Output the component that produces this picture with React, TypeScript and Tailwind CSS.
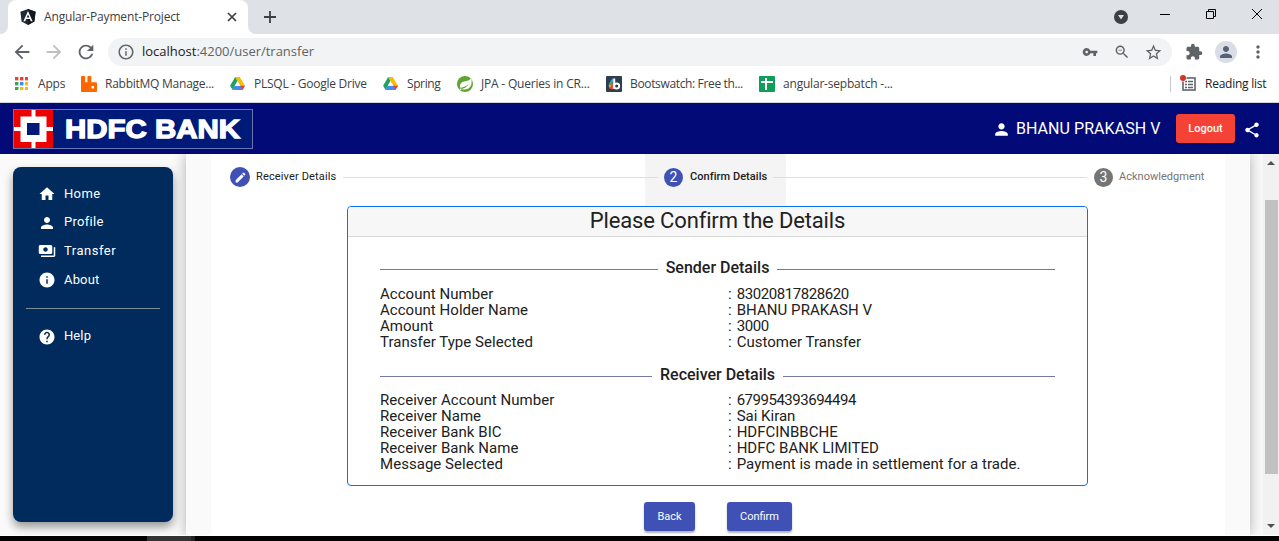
import React from "react";
import {
  MdArrowBack, MdArrowForward, MdRefresh, MdInfoOutline, MdVpnKey, MdZoomOut, MdStarBorder,
  MdExtension, MdPerson, MdMoreVert, MdHome, MdPayments, MdInfo, MdHelp, MdShare, MdEdit,
} from "react-icons/md";

function AngularLogo() {
  return (
    <svg viewBox="0 0 16 16" className="h-4 w-4 shrink-0">
      <path d="M8 0 15.6 2.7 14.4 12.6 8 16 1.6 12.6.4 2.7Z" fill="#1f2937" />
      <path d="M8 0 15.6 2.7 14.4 12.6 8 16Z" fill="#111820" />
      <path d="M8 2 3.4 12.3H5.2L6.1 10H9.9L10.8 12.3H12.6ZM8 5.4 9.3 8.5H6.7Z" fill="#fff" />
    </svg>
  );
}

function DriveLogo() {
  return (
    <svg viewBox="0 0 16 14" className="h-[13px] w-[15px]">
      <path d="M5.5 0H10.5L16 9.3H11Z" fill="#fbbc04" />
      <path d="M5.5 0 8 4.4 2.8 14 0 9.3Z" fill="#1ea362" />
      <path d="M5 9.3H16L13.3 14H2.6Z" fill="#4688f4" />
      <path d="M11 9.3H16L13.3 14Z" fill="#ea4335" />
      <path d="M8 4.6 10.8 9.3H5.2Z" fill="#fff" />
    </svg>
  );
}

function AppsGrid() {
  const c = ["#ea4335", "#ea4335", "#ea4335", "#34a853", "#4285f4", "#fbbc04", "#34a853", "#fbbc04", "#fbbc04"];
  return (
    <svg viewBox="0 0 13 13" className="h-[13px] w-[13px]">
      {c.map((f, i) => (
        <rect key={i} x={(i % 3) * 5} y={Math.floor(i / 3) * 5} width="3.4" height="3.4" fill={f} />
      ))}
    </svg>
  );
}

function RabbitLogo() {
  return (
    <svg viewBox="0 0 16 16" className="h-4 w-4">
      <path d="M0 1Q0 0 1 0H3.3Q4.2 0 4.2 1V6.2H6.4V1Q6.4 0 7.4 0H9.4Q10.3 0 10.3 1V6.2H15Q16 6.2 16 7.2V15Q16 16 15 16H1Q0 16 0 15ZM10.6 10V12.5H13V10Z" fill="#ff6600" fillRule="evenodd" />
    </svg>
  );
}

function SpringLogo() {
  return (
    <svg viewBox="0 0 16 16" className="h-4 w-4">
      <circle cx="8" cy="8" r="8" fill="#5fa532" />
      <path d="M14.2 2.1C15 5.8 15 10.7 11.4 12.5 8.4 14 5.2 13.2 2.8 13.4 6 13 9.5 11.8 11.7 8.1 8.5 11 5.7 11.6 3.2 11.8 2.2 8.7 4 6.2 7.3 5.6 10.3 5 12.8 4.6 14.2 2.1Z" fill="#fff" />
      <circle cx="3.4" cy="13.3" r=".8" fill="#fff" />
    </svg>
  );
}

function BootswatchLogo() {
  return (
    <svg viewBox="0 0 16 16" className="h-4 w-4">
      <rect width="16" height="16" rx="1" fill="#2c3e50" />
      <path d="M7 2V7L4.5 5Z" fill="#4f9fd0" />
      <path d="M4.5 5 7 7.5 2.5 9Z" fill="#2fb58c" />
      <path d="M2.5 9 7 8 3.5 12.5Z" fill="#f39c12" />
      <path d="M3.5 12.5 7 8V13.5Z" fill="#e74c3c" />
      <path d="M8.2 2.5V13" stroke="#fff" strokeWidth="2" />
      <circle cx="10.6" cy="10" r="2.6" fill="none" stroke="#fff" strokeWidth="2" />
    </svg>
  );
}

function SheetLogo() {
  return (
    <svg viewBox="0 0 16 16" className="h-4 w-4">
      <rect width="16" height="16" rx="1" fill="#0f9d58" />
      <path d="M7 2V14M2 6H14" stroke="#fff" strokeWidth="2" />
    </svg>
  );
}

function ReadingListIcon() {
  return (
    <svg viewBox="0 0 18 17" className="h-[17px] w-[18px]">
      <rect x="3" y="3" width="12" height="12" fill="none" stroke="#5f6368" strokeWidth="1.6" />
      <path d="M5 6.5H7M5 9.5H7M5 12.5H7M8 6.5H13M8 9.5H13M8 12.5H13" stroke="#5f6368" strokeWidth="1.3" />
      <circle cx="3" cy="3" r="3.6" fill="#fff" />
      <circle cx="3" cy="3" r="3" fill="#d93025" />
    </svg>
  );
}

function Bookmark({ icon, label, width, track }: { icon: React.ReactNode; label: string; width: string; track: string }) {
  return (
    <div className={`flex shrink-0 items-center whitespace-nowrap ${width}`}>
      <span className="flex w-6 shrink-0">{icon}</span>
      <span className={track}>{label}</span>
    </div>
  );
}

function Browser() {
  return (
    <div className="flex h-[103px] shrink-0 flex-col border-b border-[#d5d8dc] bg-white font-['Open_Sans',sans-serif] text-[12px] text-[#3c4043]">
      <div className="flex h-[34px] shrink-0 bg-[#dee1e6]">
        <div className="flex w-2 items-end bg-white"><div className="h-full w-2 rounded-br-lg bg-[#dee1e6]" /></div>
        <div className="flex w-[240px] items-center rounded-t-lg bg-white pl-3">
          <AngularLogo />
          <span className="ml-2 w-[183px] whitespace-nowrap tracking-[-0.16px]">Angular-Payment-Project</span>
          <svg viewBox="0 0 10 10" className="h-[10px] w-[10px] shrink-0"><path d="M1 1 9 9M9 1 1 9" stroke="#3c4043" strokeWidth="1.7" /></svg>
        </div>
        <div className="w-2 bg-white"><div className="h-full w-2 rounded-bl-lg bg-[#dee1e6]" /></div>
        <svg viewBox="0 0 12 12" className="mt-[11px] ml-2 h-3 w-3"><path d="M6 0V12M0 6H12" stroke="#3c4043" strokeWidth="1.8" /></svg>
        <svg viewBox="0 0 14 14" className="mt-[10px] ml-[838px] h-[14px] w-[14px]"><circle cx="7" cy="7" r="7" fill="#3c4043" /><path d="M4 5H10L7 9.5Z" fill="#dee1e6" /></svg>
        <svg viewBox="0 0 10 10" className="mt-[9px] ml-8 h-[10px] w-[10px]"><path d="M0 5.5H10" stroke="#000" /></svg>
        <svg viewBox="0 0 10 10" className="mt-[9px] ml-9 h-[10px] w-[10px]"><path d="M.5 2.5H7.5V9.5H.5ZM2.5 2V.5H9.5V7.5H8" fill="none" stroke="#000" /></svg>
        <svg viewBox="0 0 10 10" className="mt-[9px] ml-9 h-[10px] w-[10px]"><path d="M0 0 10 10M10 0 0 10" stroke="#000" /></svg>
      </div>
      <div className="flex h-9 shrink-0 items-center text-[#5f6368]">
        <MdArrowBack className="ml-[11px] h-[22px] w-[22px]" />
        <MdArrowForward className="ml-[10px] h-[22px] w-[22px] text-[#bdbfc1]" />
        <MdRefresh className="ml-[10px] h-[22px] w-[22px]" />
        <div className="ml-[11px] flex h-7 w-[1064px] items-center rounded-full bg-[#f1f3f4]">
          <MdInfoOutline className="ml-[9px] h-[18px] w-[18px]" />
          <span className="ml-[7px] w-[929px] text-[13px] tracking-[-0.01px]"><span className="text-[#202124]">localhost</span>:4200/user/transfer</span>
          <MdVpnKey className="ml-[11px] h-4 w-4" />
          <MdZoomOut className="ml-[15px] h-[18px] w-[18px] scale-95" />
          <MdStarBorder className="ml-[13px] h-[19px] w-[19px]" />
        </div>
        <MdExtension className="ml-[13px] h-[18px] w-[18px]" />
        <span className="ml-3 flex h-[22px] w-[22px] items-center justify-center rounded-full bg-[#dadde3]"><MdPerson className="h-[18px] w-[18px] text-[#536179]" /></span>
        <MdMoreVert className="ml-[11px] h-5 w-5" />
      </div>
      <div className="flex h-[27px] items-center pl-[15px]">
        <div className="flex w-[66px] items-center"><AppsGrid /><span className="ml-[10px] tracking-[-0.2px]">Apps</span></div>
        <Bookmark icon={<RabbitLogo />} label="RabbitMQ Manage..." width="w-[149px]" track="tracking-[-0.25px]" />
        <Bookmark icon={<DriveLogo />} label="PLSQL - Google Drive" width="w-[153px]" track="tracking-[-0.25px]" />
        <Bookmark icon={<DriveLogo />} label="Spring" width="w-[74px]" track="tracking-[-0.4px]" />
        <Bookmark icon={<SpringLogo />} label="JPA - Queries in CR..." width="w-[149px]" track="tracking-[-0.2px]" />
        <Bookmark icon={<BootswatchLogo />} label="Bootswatch: Free th..." width="w-[153px]" track="tracking-[-0.35px]" />
        <Bookmark icon={<SheetLogo />} label="angular-sepbatch -..." width="w-[411px]" track="tracking-[-0.2px]" />
        <div className="h-4 w-px bg-[#c7cacd]" />
        <span className="ml-[9px] w-[25px] shrink-0"><ReadingListIcon /></span>
        <span className="whitespace-nowrap text-[#202124] tracking-[-0.25px]">Reading list</span>
      </div>
    </div>
  );
}

function BankLogo() {
  return (
    <div className="flex h-10 w-[240px] items-center border border-[#6976ad] bg-[#001a79]">
      <svg viewBox="0 0 39 38" className="h-[38px] w-[39px] shrink-0">
        <rect width="39" height="38" fill="#ed0000" />
        <path d="M17.5 0H21.5V38H17.5ZM0 17H39V21H0Z" fill="#fff" />
        <rect x="6.5" y="6.5" width="26" height="25.5" fill="#fff" />
        <rect x="13" y="13" width="12.5" height="12" fill="#001a79" />
      </svg>
      <svg viewBox="0 0 190 38" className="h-[38px] w-[190px]">
        <text x="12" y="28" textLength="175" lengthAdjust="spacingAndGlyphs" fill="#fff" stroke="#fff" strokeWidth="1.3" fontFamily="Liberation Sans" fontWeight="700" fontSize="26">HDFC BANK</text>
      </svg>
    </div>
  );
}

const nav = [
  { Icon: MdHome, label: "Home", track: "tracking-[0.35px]" },
  { Icon: MdPerson, label: "Profile", track: "tracking-[0.3px]" },
  { Icon: MdPayments, label: "Transfer", track: "tracking-[0.5px]" },
  { Icon: MdInfo, label: "About", track: "tracking-[0.15px]" },
];

function Sidebar() {
  return (
    <aside className="h-[355px] w-[160px] rounded-lg bg-[#002b5c] px-[13px] pt-3 text-[13px] text-white shadow-[0_5px_10px_rgba(0,0,0,0.4)]">
      {nav.map(({ Icon, label, track }) => (
        <div key={label} className="flex h-[28.8px] items-center pl-[12px]">
          <Icon className="mt-px h-[18px] w-[18px]" />
          <span className={`ml-2 ${track}`}>{label}</span>
        </div>
      ))}
      <div className="mt-[14px] mb-[13px] h-px bg-[#7d8a98]" />
      <div className="flex h-[28px] items-center pl-[12px]">
        <MdHelp className="mt-px h-[18px] w-[18px]" /><span className="ml-2 tracking-[0.1px]">Help</span>
      </div>
    </aside>
  );
}

function Rows({ rows }: { rows: string[][] }) {
  return (
    <div className="text-[15px] leading-4 text-[#212121]">
      {rows.map(([a, b, track]) => (
        <div key={a} className="flex whitespace-nowrap"><span className="w-[348px] tracking-[0.04px]">{a}</span><span>:</span><span className={`ml-[5px] ${track}`}>{b}</span></div>
      ))}
    </div>
  );
}

function Heading({ label }: { label: string }) {
  return (
    <div className="flex h-5 items-center gap-2 text-[16px] font-medium text-[#212121]">
      <div className="mt-[3px] h-px flex-1 bg-[#7579a0]" /><span>{label}</span><div className="mt-[3px] h-px flex-1 bg-[#7579a0]" />
    </div>
  );
}

export default function App() {
  return (
    <div className="flex h-[541px] w-[1279px] flex-col overflow-hidden bg-white font-[Roboto,sans-serif]">
      <Browser />
      <header className="flex h-[51px] shrink-0 items-center bg-[#020a78] pl-[13px] text-white">
        <BankLogo />
        <MdPerson className="mt-[2px] ml-[739px] h-[19px] w-[19px]" />
        <span className="ml-[5px] w-[160px] whitespace-nowrap text-[16px] tracking-[0.05px]">BHANU PRAKASH V</span>
        <button className="h-[29px] w-[59px] rounded-[3px] bg-[#f44336] pt-px text-[11px] font-medium shadow">Logout</button>
        <MdShare className="mt-[2px] ml-2 h-[18px] w-[18px]" />
      </header>
      <div className="flex h-[381px] shrink-0 bg-[#fafafa]">
        <div className="w-[186px] shrink-0 pt-[13px] pl-[13px]"><Sidebar /></div>
        <div className="flex w-[1064px] shrink-0 justify-center bg-[#fafafa] shadow-[0_0_13px_rgba(0,0,0,0.3)] [clip-path:inset(0_-14px_0_-14px)]">
          <main className="w-[1014px] bg-white">
            <div className="flex h-[52px] items-center pb-[6px] text-[11px] text-[#212121]">
              <span className="ml-[19px] flex h-5 w-5 shrink-0 items-center justify-center rounded-full bg-[#3f51b5] text-white"><MdEdit className="h-[13px] w-[13px]" /></span>
              <span className="mt-px ml-[6px] w-[87px] shrink-0 whitespace-nowrap tracking-[0.14px]">Receiver Details</span>
              <div className="h-px w-[302px] bg-[#dfdfdf]" />
              <div className="-mb-[6px] flex h-[52px] w-[141px] shrink-0 items-center bg-[#f4f4f4] pb-[6px]">
                <div className="h-px w-[13px] bg-[#dfdfdf]" />
                <span className="ml-[6px] flex h-[19px] w-[19px] items-center justify-center rounded-full bg-[#3f51b5] text-[14px] text-white">2</span>
                <span className="mt-px ml-[7px] w-[83px] whitespace-nowrap font-medium tracking-[0.06px]">Confirm Details</span>
                <div className="h-px w-[13px] bg-[#dfdfdf]" />
              </div>
              <div className="h-px w-[301px] bg-[#dfdfdf]" />
              <span className="ml-[7px] flex h-[19px] w-[19px] items-center justify-center rounded-full bg-[#757575] text-[14px] text-white">3</span>
              <span className="mt-px ml-[6px] text-[#757575] tracking-[0.02px]">Acknowledgment</span>
            </div>
            <section className="ml-[136px] h-[280px] w-[741px] rounded border border-[#1070f5]">
              <h1 className="h-[30px] rounded-t border-b border-[#d8d8d8] bg-[#f7f7f7] text-center text-[22px] leading-[27px] tracking-[-0.15px] text-[#212121]">Please Confirm the Details</h1>
              <div className="px-8 pt-[21px]">
                <Heading label="Sender Details" />
                <div className="h-2" />
                <Rows rows={[["Account Number", "83020817828620", "tracking-[-0.42px]"], ["Account Holder Name", "BHANU PRAKASH V", "tracking-[0.06px]"], ["Amount", "3000", "tracking-[-0.42px]"], ["Transfer Type Selected", "Customer Transfer", "tracking-[0.02px]"]]} />
                <div className="h-[15px]" />
                <Heading label="Receiver Details" />
                <div className="h-[7px]" />
                <Rows rows={[["Receiver Account Number", "679954393694494", "tracking-[-0.48px]"], ["Receiver Name", "Sai Kiran", "tracking-[0px]"], ["Receiver Bank BIC", "HDFCINBBCHE", "tracking-[0px]"], ["Receiver Bank Name", "HDFC BANK LIMITED", "tracking-[0.03px]"], ["Message Selected", "Payment is made in settlement for a trade.", "tracking-[0.03px]"]]} />
              </div>
            </section>
            <div className="mt-4 ml-[433px] flex gap-8 text-[11px] text-white">
              <button className="h-[29px] w-[51px] rounded-[3px] bg-[#3f51b5] pt-px shadow-[0_2px_2px_rgba(0,0,0,0.3)]">Back</button>
              <button className="h-[29px] w-[65px] rounded-[3px] bg-[#3f51b5] pt-px shadow-[0_2px_2px_rgba(0,0,0,0.3)]">Confirm</button>
            </div>
          </main>
        </div>
        <div className="z-10 ml-[13px] flex w-4 flex-col items-center bg-[#f1f1f1]">
          <svg viewBox="0 0 8 4" className="mt-[7px] h-1 w-2"><path d="M0 4 4 0 8 4Z" fill="#505050" /></svg>
          <div className="mt-[35px] h-[274px] w-[13px] bg-[#c1c1c1]" />
          <svg viewBox="0 0 8 4" className="mt-[50px] h-1 w-2"><path d="M0 0 4 4 8 0Z" fill="#505050" /></svg>
        </div>
      </div>
      <div className="mt-px flex h-[5px] bg-black"><div className="ml-[147px] h-full w-11 bg-[#333]" /><div className="h-full w-1 bg-[#222]" /></div>
    </div>
  );
}
